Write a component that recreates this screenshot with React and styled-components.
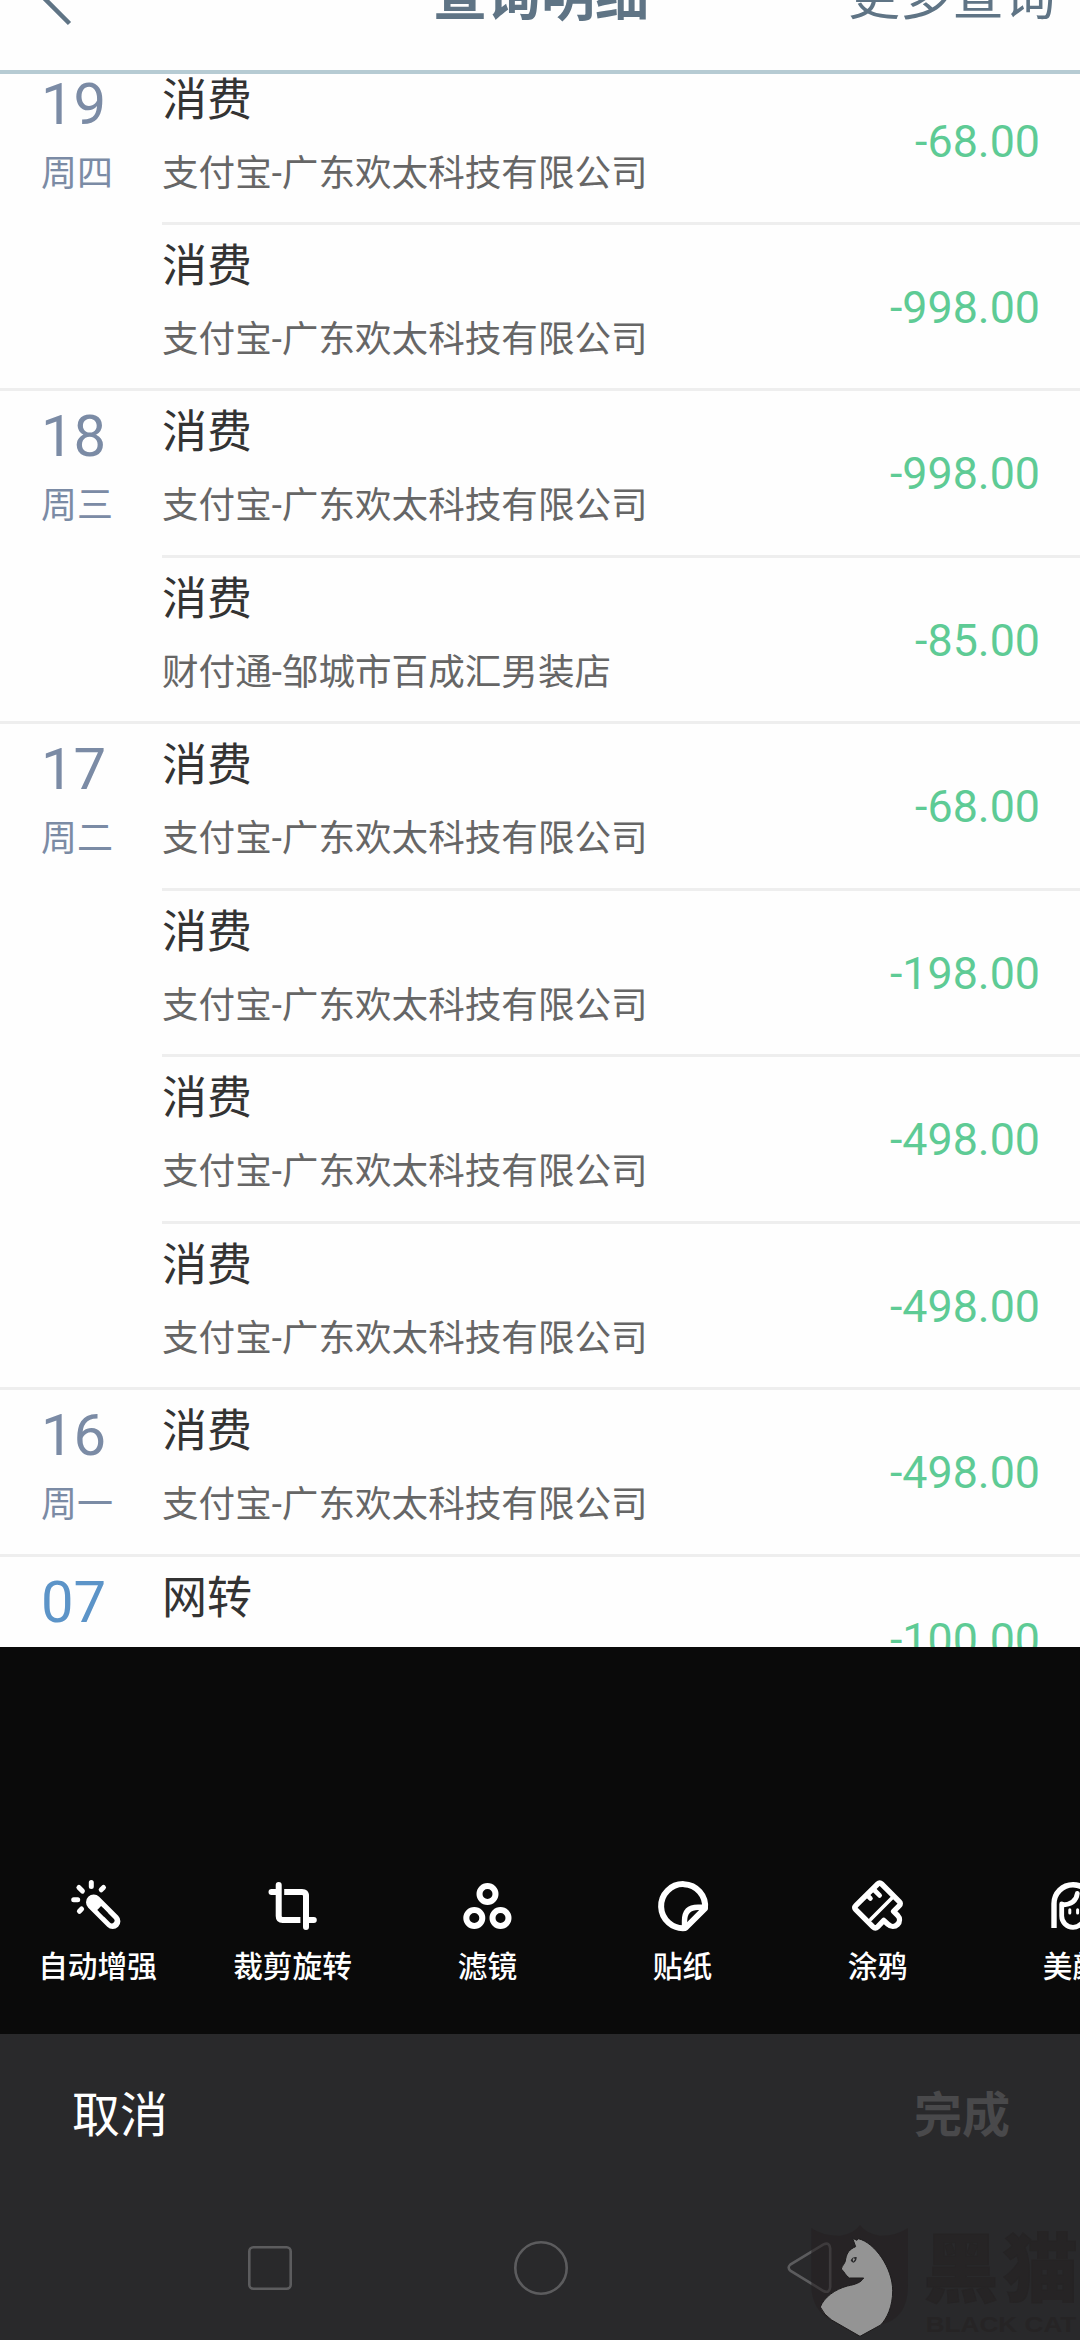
import React from 'react'
import styled, { createGlobalStyle } from 'styled-components'

const days = [
  { day: '19', week: '周四', items: [
    ['消费', '支付宝-广东欢太科技有限公司', '-68.00'],
    ['消费', '支付宝-广东欢太科技有限公司', '-998.00'],
  ] },
  { day: '18', week: '周三', items: [
    ['消费', '支付宝-广东欢太科技有限公司', '-998.00'],
    ['消费', '财付通-邹城市百成汇男装店', '-85.00'],
  ] },
  { day: '17', week: '周二', items: [
    ['消费', '支付宝-广东欢太科技有限公司', '-68.00'],
    ['消费', '支付宝-广东欢太科技有限公司', '-198.00'],
    ['消费', '支付宝-广东欢太科技有限公司', '-498.00'],
    ['消费', '支付宝-广东欢太科技有限公司', '-498.00'],
  ] },
  { day: '16', week: '周一', items: [
    ['消费', '支付宝-广东欢太科技有限公司', '-498.00'],
  ] },
  { day: '07', week: '', weekend: true, items: [
    ['网转', '', '-100.00'],
  ] },
]

const WandIcon = () => (
  <Icon viewBox="0 0 60 60">
    <path d="M25.7 26.3L44.7 45.3" strokeWidth="15.4" />
    <path d="M33.6 34.4L43.8 44.6" stroke="#0a0a0a" strokeWidth="5.4" />
    <path d="M31.2 32L38 38.8" stroke="#0a0a0a" strokeWidth="5.4" strokeLinecap="butt" />
    <path d="M23.3 6.6V10.6M10.9 11.5L14.4 15.1M33.2 13.8L35.5 11.5M5.7 23.7H9.7M11.4 35.3L13.6 33" strokeWidth="5" />
  </Icon>
)

const CropIcon = () => (
  <Icon viewBox="0 0 60 60">
    <path d="M15.7 9V40Q15.7 44 19.7 44H30M8.5 16H15.7M43 20V51M43 44H50.8" />
    <path d="M28 44H37.4M21.2 16H39Q43 16 43 20V22" strokeLinecap="butt" />
  </Icon>
)

const FilterIcon = () => (
  <Icon viewBox="0 0 60 60">
    <circle cx="29.5" cy="18" r="8" />
    <circle cx="16.3" cy="42" r="8" />
    <circle cx="42.5" cy="42" r="8" />
  </Icon>
)

const StickerIcon = () => (
  <Icon viewBox="0 0 60 60">
    <path d="M52 32.4A22 22 0 1 0 32.4 52Z" />
    <path d="M51 31.3H45Q31.5 31.3 31.5 45V50" strokeWidth="5.4" />
  </Icon>
)

const BrushIcon = () => (
  <Icon viewBox="0 0 60 60">
    <path
      d="M29.7 8Q31.7 6 33.7 8L51.3 25.6Q53.3 27.6 51.3 29.6L45.6 35.3L49.6 39.3A6.3 6.3 0 0 1 40.2 48.4L35.8 44.4L29.6 50.8Q27.3 53.1 25 50.8L8 33.8Q5.8 31.5 8 29.3Z"
      strokeWidth="5.4"
    />
    <path d="M44.2 21.8L22.8 43.2" strokeWidth="3.6" />
    <path d="M19.5 19.5L22.4 22.4M26 13.8L31.6 19.4" strokeWidth="4.8" />
  </Icon>
)

const FaceIcon = () => (
  <Icon viewBox="0 0 60 60">
    <path d="M11 52V27.7A19 19 0 0 1 49 27.7V52" strokeWidth="5.4" strokeLinecap="butt" />
    <path d="M18.7 28V40A11.3 11.3 0 0 0 41.3 40V28M18.7 29Q33 28.5 34.3 17.5" strokeWidth="4.8" />
    <path d="M26.8 33.8V37M34.6 33.8V37" strokeWidth="3" />
  </Icon>
)

const tools = [
  ['自动增强', WandIcon],
  ['裁剪旋转', CropIcon],
  ['滤镜', FilterIcon],
  ['贴纸', StickerIcon],
  ['涂鸦', BrushIcon],
  ['美颜', FaceIcon],
]

const App = () => {
  return (
    <>
      <GlobalStyle />
      <Page>
        <Photo>
          <Header>
            <Back viewBox="0 0 40 50"><path d="M28 -30L2 -4L27.5 21.5" /></Back>
            <Title>查询明细</Title>
            <More>更多查询</More>
          </Header>
          <List>
            {days.map((d) => (
              <Day key={d.day}>
                <DateBox $weekend={d.weekend}>
                  <Num>{d.day}</Num>
                  <Week>{d.week}</Week>
                </DateBox>
                <Items>
                  {d.items.map(([name, desc, money], i) => (
                    <Item key={i}>
                      <Info>
                        <Name>{name}</Name>
                        <Desc>{desc}</Desc>
                      </Info>
                      <Money>{money}</Money>
                    </Item>
                  ))}
                </Items>
              </Day>
            ))}
          </List>
        </Photo>
        <Tools>
          {tools.map(([label, Glyph]) => (
            <Tool key={label}>
              <Glyph />
              <Label>{label}</Label>
            </Tool>
          ))}
        </Tools>
        <Bottom>
          <Actions>
            <Cancel>取消</Cancel>
            <Done>完成</Done>
          </Actions>
          <Nav>
            <NavIcon viewBox="0 0 60 60"><rect x="9.3" y="9.3" width="41.4" height="41.4" rx="4" /></NavIcon>
            <NavIcon viewBox="0 0 60 60"><circle cx="30" cy="30" r="25.7" /></NavIcon>
            <NavIcon viewBox="0 0 60 60">
              <path d="M9.3 26.6Q6 29.6 9.3 32.6L42.5 53Q48.7 55.6 49.2 49V10.6Q48.7 3.6 42.5 6.4Z" />
            </NavIcon>
          </Nav>
          <Watermark viewBox="0 0 960 420">
            <path
              d="M154 84Q190 109 242 107Q280 102 300 75Q320 102 360 107Q410 108 444 84V255Q444 355 365 373L300 409L215 362Q154 330 154 255Z"
              fill="rgba(36, 31, 32, 0.55)"
            />
            <path
              d="M278 115L291 121L295 116C345 128 398 205 398 272C398 320 381 355 362 375L300 409L215 360Q192 345 181 321C192 292 225 268 262 258C288 253 302 248 311 234L268 234C256 226 254 216 244 207C246 196 257 190 257 177C261 158 268 148 287 140Z"
              fill="#949494"
              stroke="#1e1c1d"
              strokeWidth="3"
            />
            <path d="M272 181Q277 170 290 171Q290 184 281 188Q275 188 272 181Z" fill="#29292b" />
            <path d="M281 173L285 178L280 185L278 179Z" fill="#949494" />
            <WaterName x="490" y="288">黑猫</WaterName>
            <WaterSub x="497" y="396" textLength="452" lengthAdjust="spacingAndGlyphs">BLACK CAT</WaterSub>
          </Watermark>
        </Bottom>
      </Page>
    </>
  )
}

export default App

const GlobalStyle = createGlobalStyle`
  body{
    margin: 0;
    background-color: #0a0a0a;
    font-family: Roboto, "Noto Sans CJK SC", sans-serif;
  }
`
const Page = styled.div`
  display: flex;
  flex-direction: column;
  width: 1080px;
  height: 2340px;
  overflow: hidden;
  background-color: #0a0a0a;
`
const Photo = styled.div`
  flex: none;
  height: 1647px;
  overflow: hidden;
  background-color: #fefefe;
`
const Header = styled.div`
  display: grid;
  grid-template-columns: 1fr auto 1fr;
  align-items: end;
  align-content: end;
  box-sizing: border-box;
  height: 74px;
  padding: 0 24px 45px 42px;
  border-bottom: 4px solid #b6cbd3;
  overflow: hidden;
  color: #5f7485;
`
const Back = styled.svg`
  width: 40px;
  height: 50px;
  margin-bottom: -27px;
  fill: none;
  stroke: #5f7485;
  stroke-width: 4.5;
  overflow: visible;
`
const Title = styled.div`
  margin-left: -16px;
  font-size: 54px;
  font-weight: bold;
  line-height: 54px;
`
const More = styled.div`
  justify-self: end;
  font-size: 52px;
  line-height: 54px;
`
const List = styled.div`
  margin-top: -15.4px;
`
const Day = styled.div`
  display: flex;
  border-bottom: 3px solid #eeeeee;
`
const DateBox = styled.div`
  width: 121px;
  padding-left: 41px;
  color: ${(p) => (p.$weekend ? '#5c94c8' : '#7b8ba5')};
`
const Num = styled.div`
  height: 91px;
  font-size: 58px;
  line-height: 90px;
`
const Week = styled.div`
  height: 48px;
  font-size: 36px;
  line-height: 48px;
`
const Items = styled.div`
  flex: 1;
`
const Item = styled.div`
  display: flex;
  justify-content: space-between;
  height: 163.44px;
  padding-right: 40px;
  border-bottom: 3px solid #eeeeee;
  &:last-child{
    border-bottom: none;
  }
`
const Info = styled.div`
  color: #666666;
`
const Name = styled.div`
  height: 79px;
  font-size: 45px;
  line-height: 83px;
  color: #333333;
`
const Desc = styled.div`
  height: 70px;
  font-size: 36.6px;
  line-height: 71px;
`
const Money = styled.div`
  font-size: 44.8px;
  line-height: 166px;
  color: #5ecb95;
`
const Tools = styled.div`
  display: flex;
  flex: none;
  box-sizing: border-box;
  height: 387px;
  padding-top: 229px;
`
const Tool = styled.div`
  display: flex;
  flex: none;
  flex-direction: column;
  align-items: center;
  width: 195px;
`
const Icon = styled.svg`
  width: 60px;
  height: 60px;
  fill: none;
  stroke: #ffffff;
  stroke-width: 6;
  stroke-linecap: round;
  stroke-linejoin: round;
`
const Label = styled.div`
  margin-top: 11px;
  color: #ffffff;
  font-size: 29.7px;
  font-weight: 500;
  line-height: 40px;
`
const Bottom = styled.div`
  position: relative;
  flex: 1;
  background-color: #29292b;
`
const Actions = styled.div`
  display: flex;
  justify-content: space-between;
  padding: 42px 70px 0 72px;
  font-size: 48px;
  line-height: 80px;
`
const Cancel = styled.div`
  color: #ffffff;
`
const Done = styled.div`
  font-weight: bold;
  color: #49494b;
`
const Nav = styled.div`
  display: flex;
  justify-content: space-between;
  padding: 82px 239px 0 240px;
`
const NavIcon = styled.svg`
  width: 60px;
  height: 60px;
  fill: none;
  stroke: #5c5c5e;
  stroke-width: 2.6;
`
const Watermark = styled.svg`
  position: absolute;
  right: 0;
  bottom: 0;
  width: 320px;
  height: 140px;
`
const WaterName = styled.text`
  font-family: "Noto Sans CJK SC", sans-serif;
  font-size: 226px;
  font-weight: 900;
  letter-spacing: 12px;
  fill: #262425;
  stroke: #262425;
  stroke-width: 3;
`
const WaterSub = styled.text`
  font-family: "Liberation Sans", sans-serif;
  font-size: 68px;
  font-weight: bold;
  fill: #262425;
`
